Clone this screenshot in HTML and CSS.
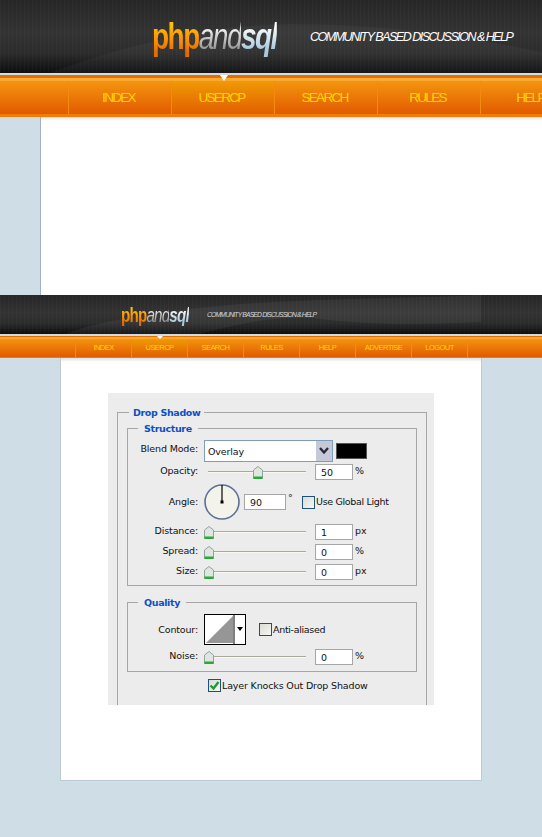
FILE: index.html
```html
<html>

<head>
  <link rel="stylesheet" href="styles.css">
  <title>
    Drop Shadow
  </title>
</head>

<body>
  <div class="header">
    <div class="logo"><span class="php">php</span><span class="and">and</span><span class="sql">sql</span></div>
    <div class="tagline">COMMUNITY BASED DISCUSSION &amp; HELP</div>
  </div>
  <div class="nav">
    <div class="nav-item">INDEX</div>
    <div class="nav-item active">USERCP</div>
    <div class="nav-item">SEARCH</div>
    <div class="nav-item">RULES</div>
    <div class="nav-item">HELP</div>
  </div>
  <div class="page page-top">
    <div class="column column-top"></div>
  </div>

  <div class="header small">
    <div class="logo"><span class="php">php</span><span class="and">and</span><span class="sql">sql</span></div>
    <div class="tagline">COMMUNITY BASED DISCUSSION &amp; HELP</div>
  </div>
  <div class="nav small">
    <div class="nav-item">INDEX</div>
    <div class="nav-item active">USERCP</div>
    <div class="nav-item">SEARCH</div>
    <div class="nav-item">RULES</div>
    <div class="nav-item">HELP</div>
    <div class="nav-item">ADVERTISE</div>
    <div class="nav-item last">LOGOUT</div>
  </div>
  <div class="page">
    <div class="column column-main">
      <div class="dialog">
        <fieldset class="group outer">
          <legend>Drop Shadow</legend>

          <fieldset class="group inner">
            <legend>Structure</legend>
            <div class="row row-blend">
              <label>Blend Mode:</label>
              <div class="select">
                <span class="select-value">Overlay</span>
                <span class="select-btn">
                  <svg width="12" height="10" viewBox="0 0 12 10"><path d="M2 2 L6 6.5 L10 2" fill="none" stroke="#2a2a3a" stroke-width="2.4"/></svg>
                </span>
              </div>
              <div class="swatch"></div>
            </div>
            <div class="row">
              <label>Opacity:</label>
              <div class="slider">
                <svg class="thumb thumb-mid" width="10" height="13" viewBox="0 0 10 13"><path d="M0.5 4 L5 0.5 L9.5 4 V12.5 H0.5 Z" fill="#dfe6e2" stroke="#8fa59c"/><path d="M0.5 10.5 H9.5 V13 H0.5 Z" fill="#2aa838"/></svg>
              </div>
              <input class="num" type="text" value="50" readonly>
              <span class="unit">%</span>
            </div>
            <div class="row row-angle">
              <label>Angle:</label>
              <svg class="dial" width="36" height="36" viewBox="0 0 36 36">
                <circle cx="18" cy="18" r="17" fill="#f3f3ec" stroke="#5d7096" stroke-width="1.6"/>
                <path d="M18 18 V1" stroke="#000" stroke-width="1.2"/>
                <rect x="16.5" y="16.5" width="3" height="3" fill="#000"/>
              </svg>
              <input class="num angle" type="text" value="90" readonly>
              <span class="unit degree">°</span>
              <span class="check"></span>
              <span class="check-label">Use Global Light</span>
            </div>
            <div class="row">
              <label>Distance:</label>
              <div class="slider">
                <svg class="thumb" width="10" height="13" viewBox="0 0 10 13"><path d="M0.5 4 L5 0.5 L9.5 4 V12.5 H0.5 Z" fill="#dfe6e2" stroke="#8fa59c"/><path d="M0.5 10.5 H9.5 V13 H0.5 Z" fill="#2aa838"/></svg>
              </div>
              <input class="num" type="text" value="1" readonly>
              <span class="unit">px</span>
            </div>
            <div class="row">
              <label>Spread:</label>
              <div class="slider">
                <svg class="thumb" width="10" height="13" viewBox="0 0 10 13"><path d="M0.5 4 L5 0.5 L9.5 4 V12.5 H0.5 Z" fill="#dfe6e2" stroke="#8fa59c"/><path d="M0.5 10.5 H9.5 V13 H0.5 Z" fill="#2aa838"/></svg>
              </div>
              <input class="num" type="text" value="0" readonly>
              <span class="unit">%</span>
            </div>
            <div class="row">
              <label>Size:</label>
              <div class="slider">
                <svg class="thumb" width="10" height="13" viewBox="0 0 10 13"><path d="M0.5 4 L5 0.5 L9.5 4 V12.5 H0.5 Z" fill="#dfe6e2" stroke="#8fa59c"/><path d="M0.5 10.5 H9.5 V13 H0.5 Z" fill="#2aa838"/></svg>
              </div>
              <input class="num" type="text" value="0" readonly>
              <span class="unit">px</span>
            </div>
          </fieldset>

          <fieldset class="group inner quality">
            <legend>Quality</legend>
            <div class="row row-contour">
              <label>Contour:</label>
              <svg class="contour" width="42" height="31" viewBox="0 0 42 31">
                <rect x="0.5" y="0.5" width="41" height="30" fill="#fff" stroke="#000"/>
                <path d="M2 29 L29 2 V29 Z" fill="#969696"/>
                <path d="M30 1 V30" stroke="#000"/>
                <path d="M33 13 H39 L36 17 Z" fill="#000"/>
              </svg>
              <span class="check"></span>
              <span class="check-label">Anti-aliased</span>
            </div>
            <div class="row">
              <label>Noise:</label>
              <div class="slider">
                <svg class="thumb" width="10" height="13" viewBox="0 0 10 13"><path d="M0.5 4 L5 0.5 L9.5 4 V12.5 H0.5 Z" fill="#dfe6e2" stroke="#8fa59c"/><path d="M0.5 10.5 H9.5 V13 H0.5 Z" fill="#2aa838"/></svg>
              </div>
              <input class="num" type="text" value="0" readonly>
              <span class="unit">%</span>
            </div>
          </fieldset>

          <div class="knocks">
            <span class="check checked">
              <svg width="11" height="11" viewBox="0 0 11 11"><path d="M1.5 5.5 L4.5 8.5 L9.5 2" fill="none" stroke="#1f9a3a" stroke-width="2.4"/></svg>
            </span>
            <span class="check-label">Layer Knocks Out Drop Shadow</span>
          </div>
        </fieldset>
      </div>
    </div>
  </div>
</body>

</html>
```

FILE: styles.css
```css
body {
  margin: 0;
  width: 542px;
  height: 837px;
  overflow: hidden;
  background: #cfdde6;
  font-family: 'DejaVu Sans', sans-serif;
}

/* dark header band */
.header {
  position: relative;
  display: flex;
  align-items: center;
  height: 73px;
  padding-left: 152px;
  box-sizing: border-box;
  overflow: hidden;
  background:
    repeating-linear-gradient(90deg, rgba(255, 255, 255, 0.025) 0, rgba(255, 255, 255, 0.025) 1px, transparent 1px, transparent 4px),
    linear-gradient(#262626, #333 45%, #2c2c2c 72%, #0e0e0e);
}

/* the swoosh behind the logo */
.header::before {
  content: '';
  position: absolute;
  left: 0;
  top: 0;
  width: 100%;
  height: 100%;
  background: rgba(255, 255, 255, 0.035);
  clip-path: path('M50 73 C110 50 200 25 290 24 C400 24 480 40 542 52 V73 Z');
}

.header.small {
  height: 39px;
  padding-left: 121px;
}

.header.small::before {
  background: rgba(255, 255, 255, 0.05);
  clip-path: path('M65 39 C100 25 170 15 240 9 C330 3 430 3 481 0 V27 C420 30 370 30 320 24 C290 20 250 25 200 39 Z');
}

.logo {
  position: relative;
  flex: none;
  width: 158px;
  font-family: 'Liberation Sans', sans-serif;
  font-size: 36px;
  letter-spacing: -2px;
  line-height: 40px;
  white-space: nowrap;
  transform: scaleX(0.78);
  transform-origin: left center;
}

.php {
  font-weight: bold;
  background: linear-gradient(#ffc000 20%, #ff9400 55%, #e56a00 90%);
  -webkit-background-clip: text;
  background-clip: text;
  color: transparent;
}

.and {
  font-style: italic;
  background: linear-gradient(#f4f4f4 30%, #8d8d8d 85%);
  -webkit-background-clip: text;
  background-clip: text;
  color: transparent;
}

.sql {
  font-weight: bold;
  font-style: italic;
  background: linear-gradient(#ffffff 25%, #a9cbdd 80%);
  -webkit-background-clip: text;
  background-clip: text;
  color: transparent;
}

.small .logo {
  width: 86px;
  font-size: 19.6px;
  letter-spacing: -1.1px;
  line-height: 22px;
}

.tagline {
  position: relative;
  color: #fff;
  font-family: 'Liberation Sans', sans-serif;
  font-style: italic;
  font-size: 12.5px;
  letter-spacing: -1.5px;
  white-space: nowrap;
}

.small .tagline {
  color: #d5d5d5;
  font-size: 6.8px;
  letter-spacing: -0.84px;
}

/* orange menu */
.nav {
  position: relative;
  display: flex;
  height: 42px;
  padding-left: 68px;
  box-sizing: border-box;
  overflow-x: clip;
  border-top: 3px solid #e96c02;
  border-bottom: 3px solid #f17c06;
  background: linear-gradient(#f59b10, #e25a00);
  margin-top: 2px;
}

.nav-item {
  flex: none;
  width: 103px;
  box-sizing: border-box;
  margin-top: 3px;
  padding-right: 3px;
  border-left: 1px solid #f58a12;
  text-align: center;
  color: #ffd400;
  font-family: 'Liberation Sans', sans-serif;
  font-size: 13.5px;
  letter-spacing: -1.7px;
  line-height: 33px;
}

.nav::before {
  content: '';
  position: absolute;
  left: 0;
  top: 0;
  width: 100%;
  height: 3px;
  background: rgba(255, 190, 90, 0.45);
}

.nav-item.active {
  position: relative;
  background: linear-gradient(#f09a05, #e25f00);
}

.nav-item.active::after {
  content: '';
  position: absolute;
  left: 48px;
  top: -6px;
  border: 4px solid transparent;
  border-top: 6px solid #fff;
  border-bottom: 0;
}

.nav.small {
  height: 22px;
  padding-left: 75px;
  border-top-width: 1px;
  border-bottom-width: 1px;
}

.nav.small::before {
  height: 2px;
}

.nav.small .nav-item {
  width: 56px;
  margin-top: 2px;
  padding-right: 0;
  font-size: 7.5px;
  letter-spacing: -0.55px;
  line-height: 18px;
}

.nav.small .nav-item.last {
  border-right: 1px solid #f58a12;
  width: 57px;
}

.nav.small .nav-item.active::after {
  left: 25px;
  top: -3px;
  border-width: 3px;
  border-top-width: 3px;
  border-bottom-width: 0;
}

/* page bodies */
.page-top {
  height: 178px;
}

.column {
  box-sizing: border-box;
  background: linear-gradient(#d6e3ea, #fff 4px);
  border-left: 1px solid #9fb2c0;
}

.column-top {
  height: 178px;
  margin-left: 40px;
}

.column-main {
  width: 422px;
  height: 423px;
  margin-left: 60px;
  padding: 35px 0 0 47px;
  border-left-color: #bccbd6;
  border-right: 1px solid #bccbd6;
  border-bottom: 1px solid #bccbd6;
}

/* photoshop dialog */
.dialog {
  width: 326px;
  height: 312px;
  box-sizing: border-box;
  padding: 12px 7px 0 9px;
  background: #ececec;
  color: #111;
  font-size: 9.5px;
  letter-spacing: -0.15px;
}

.group {
  margin: 0;
  padding: 0;
  min-width: 0;
  border: 1px solid #a6a6a6;
}

.group legend {
  height: 15px;
  line-height: 15px;
  margin-left: 10px;
  padding: 0 6px;
  color: #0b4fc9;
  font-weight: bold;
  font-size: 9.5px;
  letter-spacing: -0.35px;
}

.outer {
  height: 300px;
  box-sizing: border-box;
  border-bottom: 0;
}

.outer > legend {
  margin-left: 11px;
  padding: 0 4px;
}

.inner {
  margin: 1px 9px 0 9px;
  padding: 0 0 5px;
}

.quality {
  margin-top: 9px;
  padding-bottom: 6px;
}

.row {
  display: flex;
  align-items: center;
  height: 16px;
  margin-top: 4px;
}

.row label {
  flex: none;
  width: 70px;
  margin-right: 6px;
  padding-bottom: 3px;
  text-align: right;
  white-space: nowrap;
}

.row-blend {
  height: 22px;
  margin-bottom: -2px;
}

.row-blend label {
  align-self: flex-start;
  margin-top: 3px;
  padding-bottom: 0;
}

.select {
  display: flex;
  flex: none;
  width: 129px;
  height: 22px;
  box-sizing: border-box;
  border: 1px solid #7f9db9;
  background: #fff;
}

.select-value {
  flex: 1;
  padding-left: 3px;
  line-height: 22px;
}

.select-btn {
  display: flex;
  align-items: center;
  justify-content: center;
  width: 16px;
  background: #c6cad8;
}

.swatch {
  width: 31px;
  height: 16px;
  margin-left: 3px;
  box-sizing: border-box;
  background: #000;
  border: 1px solid #555;
}

.slider {
  position: relative;
  flex: none;
  width: 105px;
  height: 16px;
  margin-right: 6px;
}

.slider::before {
  content: '';
  position: absolute;
  left: 4px;
  top: 7px;
  width: 98px;
  height: 1px;
  background: #a9a99c;
  border-bottom: 1px solid #f9f9ef;
}

.thumb {
  position: absolute;
  left: 0;
  top: 2px;
}

.thumb-mid {
  left: 49px;
}

.num {
  flex: none;
  width: 38px;
  height: 16px;
  box-sizing: border-box;
  margin: 0;
  padding: 0 0 0 5px;
  border: 1px solid #a6a6a6;
  background: #fff;
  color: #111;
  font-family: inherit;
  font-size: 9.5px;
  outline: none;
}

.unit {
  margin-left: 2px;
  padding-bottom: 3px;
}

.row-angle {
  height: 36px;
}

.row-angle label {
  padding-bottom: 2px;
}

.dial {
  flex: none;
}

.num.angle {
  width: 42px;
  margin-left: 4px;
}

.degree {
  width: 14px;
  align-self: flex-start;
  margin-top: 8px;
  padding-bottom: 0;
}

.check {
  display: inline-flex;
  flex: none;
  width: 13px;
  height: 13px;
  box-sizing: border-box;
  border: 1px solid #1c5180;
  background: linear-gradient(135deg, #dcdcd6, #f6f6f2);
}

.check-label {
  margin-left: 1px;
  white-space: nowrap;
}

.row .check-label {
  letter-spacing: -0.32px;
}

.row-angle .check-label {
  padding-bottom: 2px;
}

.row-contour {
  height: 31px;
}

.row-contour label {
  padding-bottom: 0;
}

.contour {
  flex: none;
  margin-right: 13px;
}

.knocks {
  display: flex;
  align-items: center;
  height: 13px;
  margin: 7px 0 0 90px;
}
```
